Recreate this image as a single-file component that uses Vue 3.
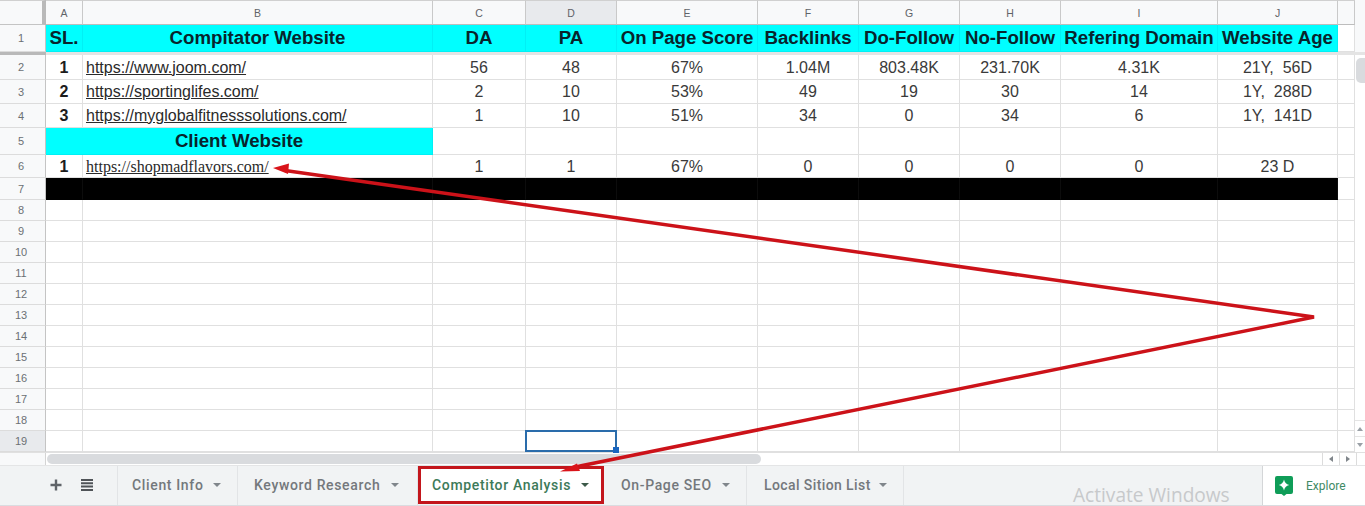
<script setup>
const letters = ['A','B','C','D','E','F','G','H','I','J']

const topRow = ['SL.','Compitator Website','DA','PA','On Page Score','Backlinks','Do-Follow','No-Follow','Refering Domain','Website Age']

const dataRows = [
  { n: 2, cls: 'h25', sl: '1', url: 'https://www.joom.com/', vals: ['56','48','67%','1.04M','803.48K','231.70K','4.31K','21Y,  56D'] },
  { n: 3, cls: 'h24', sl: '2', url: 'https://sportinglifes.com/', vals: ['2','10','53%','49','19','30','14','1Y,  288D'] },
  { n: 4, cls: 'h24', sl: '3', url: 'https://myglobalfitnesssolutions.com/', vals: ['1','10','51%','34','0','34','6','1Y,  141D'] }
]
const clientRow = { n: 6, sl: '1', url: 'https://shopmadflavors.com/', vals: ['1','1','67%','0','0','0','0','23 D'] }
const emptyRows = [8,9,10,11,12,13,14,15,16,17,18,19]

const tabs = [
  { name: 'Client Info', cls: 'tab-client' },
  { name: 'Keyword Research', cls: 'tab-keyword' },
  { name: 'Competitor Analysis', cls: 'tab-active' },
  { name: 'On-Page SEO', cls: 'tab-onpage' },
  { name: 'Local Sition List', cls: 'tab-local' }
]
</script>

<template>
  <div class="page">
    <div class="sheet">
      <div class="grid">
        <div class="row head-row">
          <div class="corner"></div>
          <div v-for="l in letters" :key="l" class="col-head" :class="{ on: l === 'D' }">{{ l }}</div>
          <div class="col-head tail"></div>
        </div>

        <div class="row h27">
          <div class="label">1</div>
          <div v-for="t in topRow" :key="t" class="cell cyan bold-head">{{ t }}</div>
          <div class="cell blank"></div>
        </div>

        <div class="freeze"><div class="freeze-left"></div></div>

        <div v-for="r in dataRows" :key="r.n" class="row" :class="r.cls">
          <div class="label">{{ r.n }}</div>
          <div class="cell sl">{{ r.sl }}</div>
          <div class="cell link"><u>{{ r.url }}</u></div>
          <div v-for="(v, i) in r.vals" :key="i" class="cell val">{{ v }}</div>
          <div class="cell blank"></div>
        </div>

        <div class="row h27">
          <div class="label">5</div>
          <div class="cell cyan bold-head merged">Client Website</div>
          <div v-for="i in 9" :key="i" class="cell"></div>
        </div>

        <div class="row h23">
          <div class="label">{{ clientRow.n }}</div>
          <div class="cell sl">{{ clientRow.sl }}</div>
          <div class="cell link serif"><u>{{ clientRow.url }}</u></div>
          <div v-for="(v, i) in clientRow.vals" :key="i" class="cell val">{{ v }}</div>
          <div class="cell blank"></div>
        </div>

        <div class="row h22">
          <div class="label">7</div>
          <div v-for="i in 10" :key="i" class="cell black"></div>
          <div class="cell blank"></div>
        </div>

        <div v-for="n in emptyRows" :key="n" class="row h21">
          <div class="label" :class="{ on: n === 19 }">{{ n }}</div>
          <div v-for="i in 11" :key="i" class="cell">
            <div v-if="n === 19 && i === 4" class="selection"><span class="handle"></span></div>
          </div>
        </div>
      </div>

      <div class="vscroll">
        <div class="v-top"></div>
        <div class="v-bar"></div>
        <div class="v-track"><div class="v-thumb"></div></div>
        <div class="v-btn"><span class="tri up"></span></div>
        <div class="v-btn"><span class="tri down"></span></div>
      </div>
    </div>

    <div class="hscroll">
      <div class="h-left"></div>
      <div class="h-area"><div class="h-thumb"></div></div>
      <div class="h-btn"><span class="tri left"></span></div>
      <div class="h-btn"><span class="tri right"></span></div>
      <div class="h-end"></div>
    </div>

    <div class="tabbar">
      <div class="tools">
        <svg class="tool-plus" width="12" height="12" viewBox="0 0 12 12"><path d="M4.800 0.500h2.400v4.300h4.300v2.400H7.200v4.300H4.800V7.200H0.500V4.800h4.300z" fill="#5f6368"/></svg>
        <svg class="tool-list" width="14" height="12" viewBox="0 0 14 12"><path d="M1 0h12v2H1zM1 3.300h12v2H1zM1 6.600h12v2H1zM1 9.900h12v2H1z" fill="#4f5357"/></svg>
      </div>
      <div v-for="t in tabs" :key="t.name" class="tab" :class="t.cls">
        <span class="tab-name">{{ t.name }}</span>
        <span class="caret"></span>
      </div>
      <div class="spacer"></div>
      <div class="explore">
        <svg width="18" height="20" viewBox="0 0 18 20">
          <path d="M2 0h14a2 2 0 0 1 2 2v14a2 2 0 0 1-2 2h-4.500L9 20l-2.500-2H2a2 2 0 0 1-2-2V2a2 2 0 0 1 2-2z" fill="#0f9d58"/>
          <path d="M9 3.500c.6 3 2.200 4.700 5.200 5.500-3 .8-4.600 2.500-5.200 5.500-.6-3-2.200-4.700-5.200-5.500 3-.8 4.600-2.500 5.200-5.500z" fill="#fff"/>
        </svg>
        <span class="explore-text">Explore</span>
      </div>
    </div>

    <div class="watermark">Activate Windows</div>

    <svg class="arrows" width="1365" height="506" viewBox="0 0 1365 506">
      <path d="M285 170.500 L1314 317 L575 467" fill="none" stroke="#cc1219" stroke-width="3.500" stroke-linejoin="miter"/>
      <path d="M273 168 L289 163.500 L288 174 Z" fill="#d9141a"/>
      <path d="M560 471.500 L577 463.500 L580 471 Z" fill="#d9141a"/>
    </svg>
  </div>
</template>

<style>
html, body { margin: 0; background: #fff; }
</style>

<style scoped>
.page {
  position: relative;
  width: 1365px;
  height: 506px;
  overflow: hidden;
  background: #fff;
  display: flex;
  flex-direction: column;
  font-family: "Liberation Sans", Arial, sans-serif;
  color: #222;
}
.sheet { display: flex; height: 452px; flex: none; }
.grid { width: 1355px; flex: none; }
.row {
  display: grid;
  grid-template-columns: 46px 37px 350px 93px 91px 141px 101px 101px 101px 157px 120px 17px;
}
.head-row { height: 25px; }
.h27 { height: 27px; }
.h25 { height: 25px; }
.h24 { height: 24px; }
.h23 { height: 23px; }
.h22 { height: 22px; }
.h21 { height: 21px; }

.corner {
  box-sizing: border-box;
  background: #f8f9fa;
  border-top: 1px solid #d0d0d0;
  border-right: 4px solid #b9b9b9;
  border-bottom: 1px solid #c4c4c4;
}
.col-head {
  box-sizing: border-box;
  background: #f8f9fa;
  border-top: 1px solid #d0d0d0;
  border-right: 1px solid #c9c9c9;
  border-bottom: 1px solid #bdbdbd;
  color: #5f6368;
  font-size: 10.500px;
  display: flex;
  align-items: center;
  justify-content: center;
}
.col-head.on { background: #e8eaed; }
.label {
  box-sizing: border-box;
  background: #f8f9fa;
  border-right: 1px solid #c4c4c4;
  border-bottom: 1px solid #dcdcdc;
  color: #6b7074;
  font-size: 11px;
  display: flex;
  align-items: center;
  justify-content: center;
  padding-right: 3px;
}
.label.on { background: #e8eaed; }
.cell {
  box-sizing: border-box;
  position: relative;
  border-right: 1px solid #e0e0e0;
  border-bottom: 1px solid #e0e0e0;
  display: flex;
  align-items: center;
  min-width: 0;
  white-space: pre;
}
.cell.blank { background: #fff; }
.cyan {
  background: #00ffff;
  border-color: #00f0f5;
  justify-content: center;
}
.bold-head {
  font-weight: 700;
  font-size: 18.670px;
  color: #08242c;
}
.merged { grid-column: span 2; }
.sl {
  justify-content: center;
  padding-top: 1px;
  font-weight: 700;
  font-size: 16px;
  color: #1c1c1c;
}
.link {
  padding-left: 3px;
  padding-top: 1px;
  font-size: 16px;
  color: #2a2a2a;
}
.serif {
  font-family: "Liberation Serif", "Times New Roman", serif;
  font-size: 16px;
}
.val {
  justify-content: center;
  padding-top: 1px;
  font-size: 16px;
  color: #3a3a3a;
}
.black { background: #000; border-color: #0c0c0c; border-bottom-color: #000; }

.freeze { height: 3px; background: #e4e4e4; }
.freeze-left { width: 46px; height: 3px; background: #b9b9b9; }

.selection {
  position: absolute;
  left: -1px;
  top: -1px;
  right: -1px;
  bottom: -1px;
  border: 2px solid #2a6cab;
  z-index: 2;
}
.handle {
  position: absolute;
  right: -4px;
  bottom: -3px;
  width: 6px;
  height: 6px;
  background: #1a66c0;
}

.vscroll {
  width: 10px;
  flex: none;
  display: flex;
  flex-direction: column;
}
.v-top { height: 52px; background: #f8f9fa; }
.v-bar { height: 3px; background: #e4e4e4; }
.v-track { flex: 1; padding-top: 3px; box-sizing: border-box; }
.v-thumb {
  width: 9px;
  height: 25px;
  margin-left: 1px;
  border-radius: 5px 0 0 5px;
  background: #d9dbde;
}
.v-btn {
  height: 16px;
  box-sizing: border-box;
  border-top: 1px solid #e4e4e4;
  display: flex;
  align-items: center;
  justify-content: center;
}
.tri { width: 0; height: 0; display: block; }
.tri.up { border: 3px solid transparent; border-top: 0; border-bottom: 4px solid #9aa0a6; }
.tri.down { border: 3px solid transparent; border-bottom: 0; border-top: 4px solid #9aa0a6; }
.tri.left { border: 3px solid transparent; border-left: 0; border-right: 4px solid #80868b; }
.tri.right { border: 3px solid transparent; border-right: 0; border-left: 4px solid #80868b; }

.hscroll {
  height: 13px;
  flex: none;
  display: flex;
  border-top: 1px solid #e0e0e0;
  box-sizing: border-box;
}
.h-left {
  width: 46px;
  flex: none;
  box-sizing: border-box;
  background: #f8f9fa;
  border-right: 1px solid #d4d4d4;
}
.h-area { width: 1276px; flex: none; padding-top: 1px; box-sizing: border-box; }
.h-thumb {
  width: 714px;
  height: 10px;
  margin-left: 1px;
  border-radius: 5px;
  background: #d9dbde;
}
.h-btn {
  width: 17px;
  flex: none;
  box-sizing: border-box;
  border-left: 1px solid #dcdcdc;
  display: flex;
  align-items: center;
  justify-content: center;
}
.h-end { flex: 1; border-left: 1px solid #dcdcdc; }

.tabbar {
  height: 41px;
  flex: none;
  display: flex;
  background: #f1f3f4;
  border-top: 1px solid #e4e5e6;
  border-bottom: 1px solid #dadce0;
  box-sizing: border-box;
}
.tools {
  width: 118px;
  flex: none;
  box-sizing: border-box;
  border-right: 1px solid #e2e4e6;
  display: flex;
  align-items: center;
  padding: 0 0 2px 50px;
}
.tool-plus { margin-right: 18px; }
.tab {
  flex: none;
  box-sizing: border-box;
  border-right: 1px solid #e2e4e6;
  display: flex;
  align-items: center;
  justify-content: space-between;
  font-family: Roboto, "Liberation Sans", sans-serif;
  font-weight: 500;
  font-size: 14px;
  letter-spacing: .65px;
  color: #74787c;
  padding-bottom: 2px;
}
.tab-client { width: 120px; padding-left: 14px; padding-right: 16px; }
.tab-keyword { width: 180px; padding-left: 16px; padding-right: 18px; }
.tab-active {
  width: 186px;
  height: 38px;
  padding-left: 11px;
  padding-right: 12px;
  padding-bottom: 0;
  background: #fff;
  border: 3px solid #c3161c;
  color: #3d7a59;
}
.tab-onpage { width: 143px; padding-left: 17px; padding-right: 16px; }
.tab-local { width: 157px; padding-left: 17px; padding-right: 16px; letter-spacing: .4px; }
.caret {
  width: 0;
  height: 0;
  border-left: 4px solid transparent;
  border-right: 4px solid transparent;
  border-top: 4px solid #80868b;
}
.tab-active .caret { border-top-color: #3c5a49; }
.spacer { flex: 1; }
.explore {
  width: 103px;
  flex: none;
  box-sizing: border-box;
  background: #fff;
  border-left: 1px solid #d4d6d8;
  display: flex;
  align-items: center;
  padding: 0 0 0 12px;
  gap: 13px;
}
.explore-text {
  font-family: Roboto, "Liberation Sans", sans-serif;
  font-size: 12px;
  color: #3f8a66;
}
.watermark {
  position: absolute;
  left: 1073px;
  top: 485px;
  font-family: "Open Sans", sans-serif;
  font-size: 19.100px;
  line-height: 20px;
  color: #c7c9cb;
  white-space: nowrap;
  pointer-events: none;
}
.arrows {
  position: absolute;
  left: 0;
  top: 0;
  pointer-events: none;
}
</style>
